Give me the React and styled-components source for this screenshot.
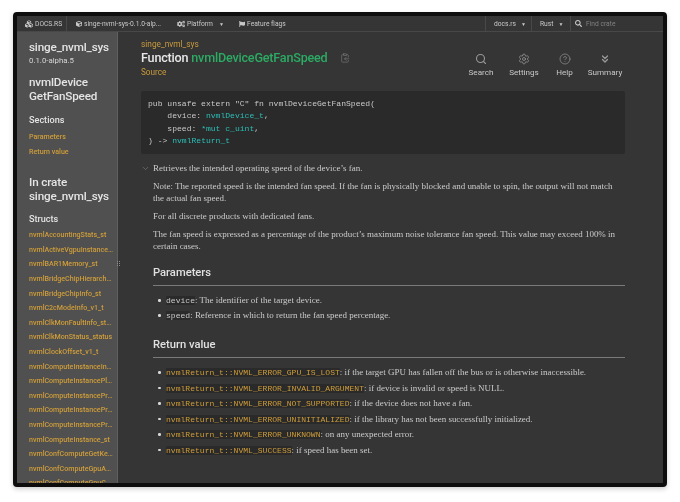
import React from "react";
import styled, { createGlobalStyle } from "styled-components";
import { FaCubes, FaCube, FaCogs, FaFlag, FaSearch } from "react-icons/fa";
import { Search, Settings, CircleHelp, ChevronsDown, ClipboardCopy, ChevronDown } from "lucide-react";

const sans = `Roboto, "Noto Sans", sans-serif`;
const serif = `"Liberation Serif", serif`;
const mono = `"Liberation Mono", monospace`;

const GlobalStyle = createGlobalStyle`
  html, body {
    margin: 0;
    padding: 0;
    background: #fff;
  }
`;

const Page = styled.div`
  width: 680px;
  height: 502px;
  box-sizing: border-box;
  padding: 12px 13px 15px 13px;
  overflow: hidden;
`;

const Window = styled.div`
  height: 100%;
  box-sizing: border-box;
  border: 4px solid #0d0d0d;
  border-radius: 4px;
  background: #353535;
  display: flex;
  flex-direction: column;
  overflow: hidden;
  box-shadow: 0 2px 5px rgba(0, 0, 0, 0.2);
  font-family: ${sans};
  filter: blur(0.3px);
`;

const TopBar = styled.div`
  height: 15px;
  flex: none;
  display: flex;
  align-items: stretch;
  border-bottom: 1px solid #484848;
  font-size: 6.7px;
  color: #c8c8c8;
`;

const TopItem = styled.div`
  display: flex;
  align-items: center;
  gap: 2px;
  box-sizing: border-box;
  width: ${({ w }) => w}px;
  padding-left: ${({ pl }) => pl}px;
  border-right: ${({ line }) => (line ? "1px solid #484848" : "none")};
  border-left: ${({ lineLeft }) => (lineLeft ? "1px solid #484848" : "none")};
  white-space: nowrap;
`;

const Caret = styled.span`
  font-size: 5px;
  margin-left: ${({ gap }) => gap}px;
`;

const FindCrate = styled.span`
  margin-left: 2px;
  color: #808080;
`;

const Spacer = styled.div`
  flex: 1;
`;

const Body = styled.div`
  flex: 1;
  min-height: 0;
  display: flex;
  position: relative;
`;

const Sidebar = styled.nav`
  width: 101px;
  flex: none;
  box-sizing: border-box;
  background: #505050;
  border-right: 1px solid #606060;
  padding: 8px 0 0 12px;
  overflow: hidden;
`;

const CrateName = styled.div`
  font-size: 11.7px;
  letter-spacing: -0.15px;
  line-height: 14px;
  font-weight: 500;
  color: #e4e4e4;
`;

const Version = styled.div`
  font-size: 7.8px;
  line-height: 10px;
  margin-top: 2px;
  color: #d6d6d6;
`;

const ItemName = styled.div`
  font-size: 11.7px;
  letter-spacing: -0.15px;
  line-height: 14px;
  font-weight: 500;
  color: #e4e4e4;
  margin-top: ${({ top }) => top}px;
`;

const SideHead = styled.div`
  font-size: 9.1px;
  line-height: 12px;
  font-weight: 500;
  color: #e4e4e4;
  margin-top: ${({ top }) => top}px;
`;

const SideList = styled.div`
  margin-top: ${({ top }) => top}px;
  width: 84px;
`;

const SideLink = styled.div`
  font-size: 7.1px;
  line-height: 14.6px;
  font-weight: 500;
  color: #cf9d3a;
  white-space: nowrap;
  overflow: hidden;
  text-overflow: ellipsis;
`;

const Grip = styled.div`
  position: absolute;
  left: 100px;
  top: 229px;
  display: grid;
  grid-template-columns: 1px 1px;
  gap: 1px;
`;

const GripDot = styled.span`
  width: 1px;
  height: 1px;
  background: #8c8c8c;
`;

const Main = styled.main`
  flex: 1;
  min-width: 0;
  box-sizing: border-box;
  padding: 7px 38px 0 23px;
  overflow: hidden;
`;

const Header = styled.div`
  display: flex;
  justify-content: space-between;
  align-items: flex-start;
`;

const Breadcrumb = styled.div`
  font-size: 8.3px;
  line-height: 11px;
  color: #c99a3c;
`;

const TitleRow = styled.div`
  display: flex;
  align-items: center;
  gap: 12px;
  margin-top: 1px;
`;

const Title = styled.h1`
  margin: 0;
  font-size: 12.6px;
  letter-spacing: -0.2px;
  line-height: 14px;
  font-weight: 500;
  color: #e8e8e8;
  white-space: nowrap;
`;

const FnName = styled.span`
  color: #2bab63;
`;

const SourceLink = styled.div`
  font-size: 8.2px;
  line-height: 12px;
  margin-top: 1px;
  color: #c99a3c;
`;

const Tools = styled.div`
  display: flex;
  margin-top: 14px;
  margin-right: -2px;
`;

const Tool = styled.div`
  width: ${({ w }) => w}px;
  display: flex;
  flex-direction: column;
  align-items: center;
  gap: 2px;
  font-size: 8.1px;
  line-height: 11px;
  color: #c8c8c8;
  svg {
    color: #999;
  }
`;

const CodeBlock = styled.pre`
  margin: 13px 0 0 0;
  height: 63px;
  box-sizing: border-box;
  padding: 7px 7px 0;
  background: #2a2a2a;
  border-radius: 2px;
  font-family: ${mono};
  font-size: 8.05px;
  line-height: 12.4px;
  color: #c9c9c9;
`;

const TypeName = styled.span`
  color: #2dbfb8;
`;

const Docblock = styled.div`
  margin-top: 8px;
  padding-left: 12px;
  position: relative;
  font-family: ${serif};
  font-size: 8.98px;
  line-height: 12px;
  color: #cbcbcb;
`;

const Toggle = styled.span`
  position: absolute;
  left: 0;
  top: 2px;
  color: #8a8a8a;
  display: flex;
`;

const Para = styled.p`
  margin: ${({ top }) => top ?? 6}px 0 0 0;
`;

const SectionHead = styled.h2`
  margin: ${({ top }) => top}px 0 0 0;
  padding-bottom: 5px;
  border-bottom: 1px solid #7a7a7a;
  font-family: ${sans};
  font-size: 11.2px;
  line-height: 14px;
  font-weight: 500;
  color: #e0e0e0;
`;

const List = styled.ul`
  margin: ${({ top }) => top}px 0 0 0;
  padding: 0 0 0 13px;
  list-style: none;
`;

const ListItem = styled.li`
  position: relative;
  line-height: 12px;
  height: ${({ h }) => h ?? 15.6}px;
  white-space: nowrap;
  &::before {
    content: "";
    position: absolute;
    left: -8px;
    top: 5px;
    width: 2.5px;
    height: 2.5px;
    border-radius: 50%;
    background: #d8d8d8;
  }
`;

const InlineCode = styled.code`
  font-family: ${mono};
  font-size: 8.05px;
  background: #2a2a2a;
  border-radius: 1px;
  color: ${({ link }) => (link ? "#cf9d3a" : "#c9c9c9")};
`;

const structs = [
  "nvmlAccountingStats_st",
  "nvmlActiveVgpuInstanceInfo_st",
  "nvmlBAR1Memory_st",
  "nvmlBridgeChipHierarchy_st",
  "nvmlBridgeChipInfo_st",
  "nvmlC2cModeInfo_v1_t",
  "nvmlClkMonFaultInfo_struct",
  "nvmlClkMonStatus_status",
  "nvmlClockOffset_v1_t",
  "nvmlComputeInstanceInfo_st",
  "nvmlComputeInstancePlacement_st",
  "nvmlComputeInstanceProfileInfo_st",
  "nvmlComputeInstanceProfileInfo_v2_st",
  "nvmlComputeInstanceProfileInfo_v3_st",
  "nvmlComputeInstance_st",
  "nvmlConfComputeGetKeyRotation_st",
  "nvmlConfComputeGpuAttestation_st",
  "nvmlConfComputeGpuCertificate_st",
];

const returns = [
  ["NVML_ERROR_GPU_IS_LOST", "if the target GPU has fallen off the bus or is otherwise inaccessible."],
  ["NVML_ERROR_INVALID_ARGUMENT", "if device is invalid or speed is NULL."],
  ["NVML_ERROR_NOT_SUPPORTED", "if the device does not have a fan."],
  ["NVML_ERROR_UNINITIALIZED", "if the library has not been successfully initialized."],
  ["NVML_ERROR_UNKNOWN", "on any unexpected error."],
  ["NVML_SUCCESS", "if speed has been set."],
];

export default function App() {
  return (
    <Page>
      <GlobalStyle />
      <Window>
        <TopBar>
          <TopItem w={50} pl={8} line>
            <FaCubes size={8} /> DOCS.RS
          </TopItem>
          <TopItem w={109} pl={9}>
            <FaCube size={6} /> singe-nvml-sys-0.1.0-alp...
          </TopItem>
          <TopItem w={63} pl={1}>
            <FaCogs size={8} /> Platform <Caret gap={4}>▼</Caret>
          </TopItem>
          <TopItem w={80} pl={0}>
            <FaFlag size={6} /> Feature flags
          </TopItem>
          <Spacer />
          <TopItem w={47} pl={8} line lineLeft>
            docs.rs <Caret gap={3}>▼</Caret>
          </TopItem>
          <TopItem w={39} pl={8} line>
            Rust <Caret gap={3}>▼</Caret>
          </TopItem>
          <TopItem w={92} pl={4}>
            <FaSearch size={7} color="#c8c8c8" /> <FindCrate>Find crate</FindCrate>
          </TopItem>
        </TopBar>
        <Body>
          <Sidebar>
            <CrateName>singe_nvml_sys</CrateName>
            <Version>0.1.0-alpha.5</Version>
            <ItemName top={9}>
              nvmlDevice
              <br />
              GetFanSpeed
            </ItemName>
            <SideHead top={11}>Sections</SideHead>
            <SideList top={4}>
              <SideLink>Parameters</SideLink>
              <SideLink>Return value</SideLink>
            </SideList>
            <ItemName top={16}>
              In crate
              <br />
              singe_nvml_sys
            </ItemName>
            <SideHead top={10}>Structs</SideHead>
            <SideList top={3}>
              {structs.map((s) => (
                <SideLink key={s}>{s}</SideLink>
              ))}
            </SideList>
          </Sidebar>
          <Grip>
            {Array.from({ length: 6 }).map((_, i) => (
              <GripDot key={i} />
            ))}
          </Grip>
          <Main>
            <Header>
              <div>
                <Breadcrumb>singe_nvml_sys</Breadcrumb>
                <TitleRow>
                  <Title>
                    Function <FnName>nvmlDeviceGetFanSpeed</FnName>
                  </Title>
                  <ClipboardCopy size={10} color="#7c7c7c" strokeWidth={1.5} />
                </TitleRow>
                <SourceLink>Source</SourceLink>
              </div>
              <Tools>
                <Tool w={42}>
                  <Search size={12} strokeWidth={2.2} />
                  Search
                </Tool>
                <Tool w={44}>
                  <Settings size={12} strokeWidth={1.5} />
                  Settings
                </Tool>
                <Tool w={37}>
                  <CircleHelp size={12} strokeWidth={1.3} />
                  Help
                </Tool>
                <Tool w={44}>
                  <ChevronsDown size={12} strokeWidth={2.6} />
                  Summary
                </Tool>
              </Tools>
            </Header>
            <CodeBlock>
              {`pub unsafe extern "C" fn nvmlDeviceGetFanSpeed(\n    device: `}
              <TypeName>nvmlDevice_t</TypeName>
              {`,\n    speed: `}
              <TypeName>*mut c_uint</TypeName>
              {`,\n) -> `}
              <TypeName>nvmlReturn_t</TypeName>
            </CodeBlock>
            <Docblock>
              <Toggle>
                <ChevronDown size={9} strokeWidth={1.5} />
              </Toggle>
              <Para top={0}>Retrieves the intended operating speed of the device’s fan.</Para>
              <Para>
                Note: The reported speed is the intended fan speed. If the fan is physically blocked and unable to spin, the output will not match the actual fan speed.
              </Para>
              <Para>For all discrete products with dedicated fans.</Para>
              <Para>
                The fan speed is expressed as a percentage of the product’s maximum noise tolerance fan speed. This value may exceed 100% in certain cases.
              </Para>
              <SectionHead top={14}>Parameters</SectionHead>
              <List top={8}>
                <ListItem h={15}>
                  <InlineCode>device</InlineCode>: The identifier of the target device.
                </ListItem>
                <ListItem h={15}>
                  <InlineCode>speed</InlineCode>: Reference in which to return the fan speed percentage.
                </ListItem>
              </List>
              <SectionHead top={14}>Return value</SectionHead>
              <List top={8}>
                {returns.map(([code, text]) => (
                  <ListItem key={code}>
                    <InlineCode link>nvmlReturn_t::{code}</InlineCode>: {text}
                  </ListItem>
                ))}
              </List>
            </Docblock>
          </Main>
        </Body>
      </Window>
    </Page>
  );
}
